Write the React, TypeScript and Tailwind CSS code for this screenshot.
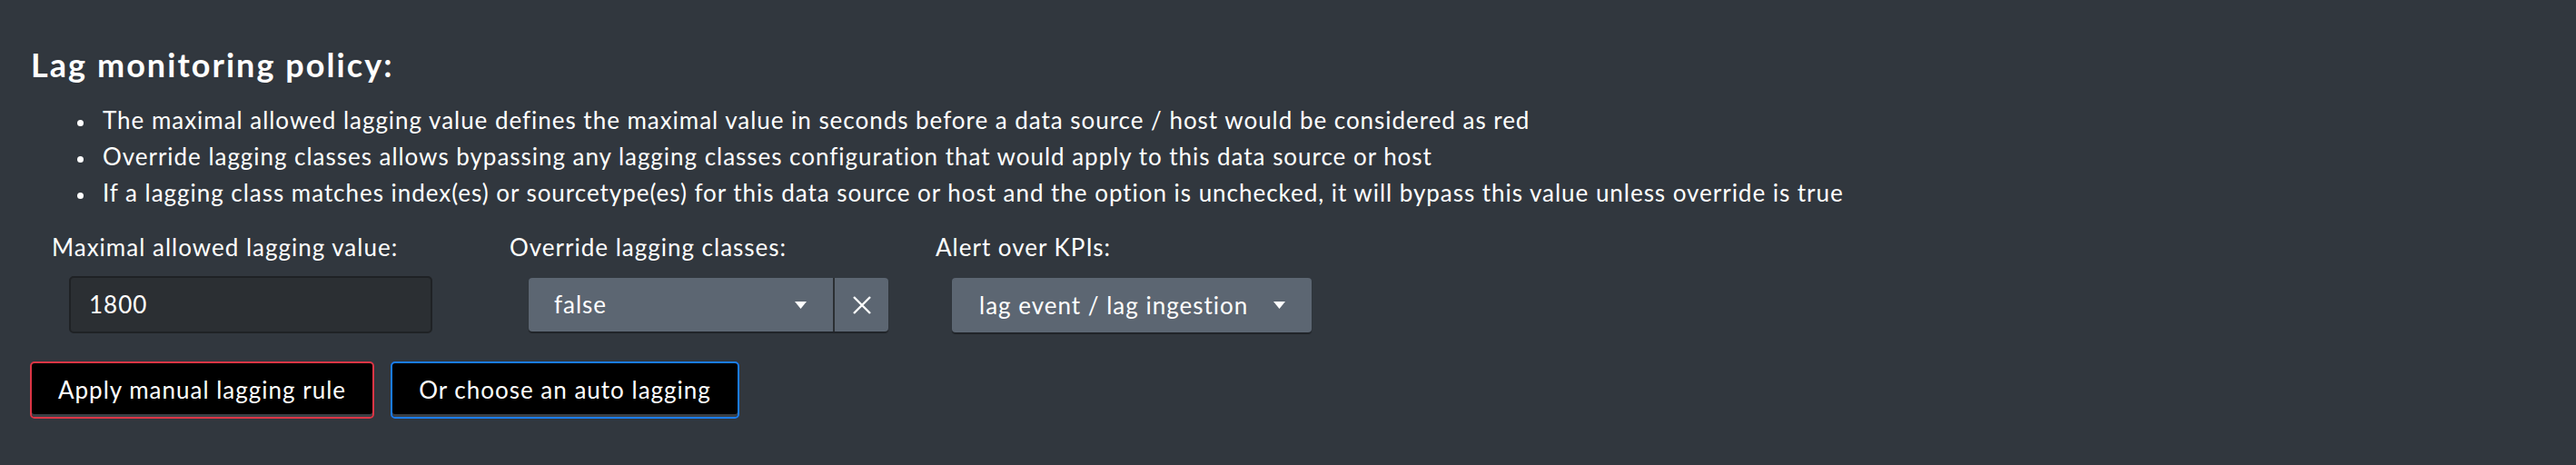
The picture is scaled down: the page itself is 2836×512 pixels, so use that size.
const BULLETS = [
  'The maximal allowed lagging value defines the maximal value in seconds before a data source / host would be considered as red',
  'Override lagging classes allows bypassing any lagging classes configuration that would apply to this data source or host',
  'If a lagging class matches index(es) or sourcetype(es) for this data source or host and the option is unchecked, it will bypass this value unless override is true',
];

function Caret() {
  return (
    <svg width="13" height="8" viewBox="0 0 13 8" className="shrink-0">
      <path d="M0 0 L13 0 L6.5 8 Z" fill="#ffffff" />
    </svg>
  );
}

export default function App() {
  return (
    <div className="w-full min-h-[512px] bg-[#31373e] text-white font-['Lato',sans-serif] pl-[34px] pt-[51px]">
      {/* Title */}
      <h2 className="text-[36px] leading-[40px] font-bold tracking-[2.05px]">Lag monitoring policy:</h2>

      {/* Bullets */}
      <ul className="mt-[21px] pl-[51px] text-[26px] leading-[40px] tracking-[0.97px]">
        {BULLETS.map(b => (
          <li key={b} className="flex items-start">
            <span className="mt-[20px] w-[7px] h-[7px] rounded-full bg-white shrink-0" />
            <span className="ml-[21px] whitespace-nowrap">{b}</span>
          </li>
        ))}
      </ul>

      {/* Form row */}
      <div className="mt-[20px] pl-[23px] flex text-[26px] tracking-[1px]">
        <div className="w-[504px] shrink-0">
          <div className="leading-[40px] whitespace-nowrap">Maximal allowed lagging value:</div>
          <div className="mt-[12px] ml-[19px] w-[400px] h-[63px] rounded-[5px] bg-[#2b2f33] border-2 border-[#1f2225] flex items-center pl-[20px]">
            1800
          </div>
        </div>

        <div className="w-[469px] shrink-0">
          <div className="leading-[40px] whitespace-nowrap">Override lagging classes:</div>
          <div className="mt-[14px] ml-[21px] w-[396px] h-[59px] flex rounded-[4px] bg-[#5c6672] shadow-[0_2px_1px_rgba(0,0,0,0.35)]">
            <div className="flex-1 flex items-center justify-between pl-[28px] pr-[29px]">
              <span>false</span>
              <Caret />
            </div>
            <div className="w-[61px] h-full border-l-2 border-[#2b2f33] flex items-center justify-center">
              <svg width="20" height="20" viewBox="0 0 20 20">
                <path d="M1 1 L19 19 M19 1 L1 19" stroke="#ffffff" strokeWidth="2.4" />
              </svg>
            </div>
          </div>
        </div>

        <div className="shrink-0">
          <div className="leading-[40px] whitespace-nowrap">Alert over KPIs:</div>
          <div className="mt-[14px] ml-[18px] w-[396px] h-[60px] flex items-center justify-between rounded-[4px] bg-[#5c6672] shadow-[0_2px_1px_rgba(0,0,0,0.35)] pl-[30px] pr-[29px]">
            <span className="whitespace-nowrap">lag event / lag ingestion</span>
            <Caret />
          </div>
        </div>
      </div>

      {/* Buttons */}
      <div className="mt-[31px] -ml-[1px] flex gap-[18px] text-[26px] tracking-[1px] pb-[51px]">
        <button className="w-[379px] h-[63px] rounded-[5px] bg-black border-2 border-[#dc3545] shadow-[inset_0_-3px_0_#3a3f45] text-white">
          Apply manual lagging rule
        </button>
        <button className="w-[384px] h-[63px] rounded-[5px] bg-black border-2 border-[#1a7cf0] shadow-[inset_0_-3px_0_#3a3f45] text-white">
          Or choose an auto lagging
        </button>
      </div>
    </div>
  );
}
